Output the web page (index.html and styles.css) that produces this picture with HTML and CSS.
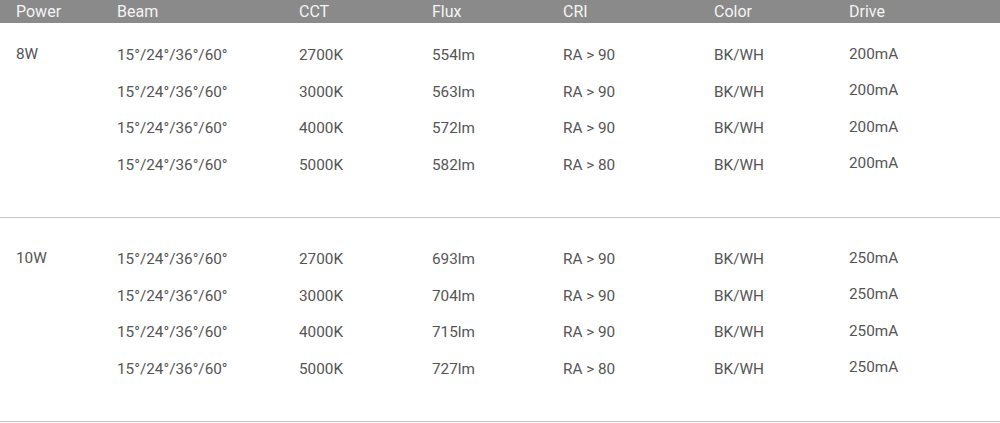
FILE: index.html
```html
<!DOCTYPE html>
<html>
<head>
<meta charset="utf-8">
<link rel="stylesheet" href="styles.css">
</head>
<body>
<div class="spec">
  <div class="row head">
    <div>Power</div><div>Beam</div><div>CCT</div><div>Flux</div><div>CRI</div><div>Color</div><div>Drive</div>
  </div>
  <div class="group first">
    <div class="row"><div class="hi">8W</div><div>15°/24°/36°/60°</div><div>2700K</div><div>554lm</div><div>RA &gt; 90</div><div>BK/WH</div><div class="hi">200mA</div></div>
    <div class="row"><div class="hi"></div><div>15°/24°/36°/60°</div><div>3000K</div><div>563lm</div><div>RA &gt; 90</div><div>BK/WH</div><div class="hi">200mA</div></div>
    <div class="row"><div class="hi"></div><div>15°/24°/36°/60°</div><div>4000K</div><div>572lm</div><div>RA &gt; 90</div><div>BK/WH</div><div class="hi">200mA</div></div>
    <div class="row"><div class="hi"></div><div>15°/24°/36°/60°</div><div>5000K</div><div>582lm</div><div>RA &gt; 80</div><div>BK/WH</div><div class="hi">200mA</div></div>
  </div>
  <div class="group second">
    <div class="row"><div class="hi">10W</div><div>15°/24°/36°/60°</div><div>2700K</div><div>693lm</div><div>RA &gt; 90</div><div>BK/WH</div><div class="hi">250mA</div></div>
    <div class="row"><div class="hi"></div><div>15°/24°/36°/60°</div><div>3000K</div><div>704lm</div><div>RA &gt; 90</div><div>BK/WH</div><div class="hi">250mA</div></div>
    <div class="row"><div class="hi"></div><div>15°/24°/36°/60°</div><div>4000K</div><div>715lm</div><div>RA &gt; 90</div><div>BK/WH</div><div class="hi">250mA</div></div>
    <div class="row"><div class="hi"></div><div>15°/24°/36°/60°</div><div>5000K</div><div>727lm</div><div>RA &gt; 80</div><div>BK/WH</div><div class="hi">250mA</div></div>
  </div>
</div>
</body>
</html>
```
FILE: styles.css
```css
html, body {
  margin: 0;
  padding: 0;
  background: #fff;
}
.spec {
  width: 1000px;
  font-family: Roboto, "Liberation Sans", sans-serif;
  color: #555;
}
.row {
  display: grid;
  grid-template-columns: 101px 182px 133px 131px 151px 135px 1fr;
  padding-left: 16px;
  height: 36.5px;
  align-items: center;
  font-size: 15.3px;
}
.row .hi {
  padding-bottom: 3px;
}
.row.head {
  height: 23px;
  background: #8a8a8a;
  color: #f4f4f4;
  font-size: 16px;
  line-height: 23px;
}
.group {
  border-bottom: 1px solid #c4c4c4;
  padding-bottom: 34px;
}
.group.first {
  padding-top: 14px;
}
.group.second {
  padding-top: 23px;
}
```
